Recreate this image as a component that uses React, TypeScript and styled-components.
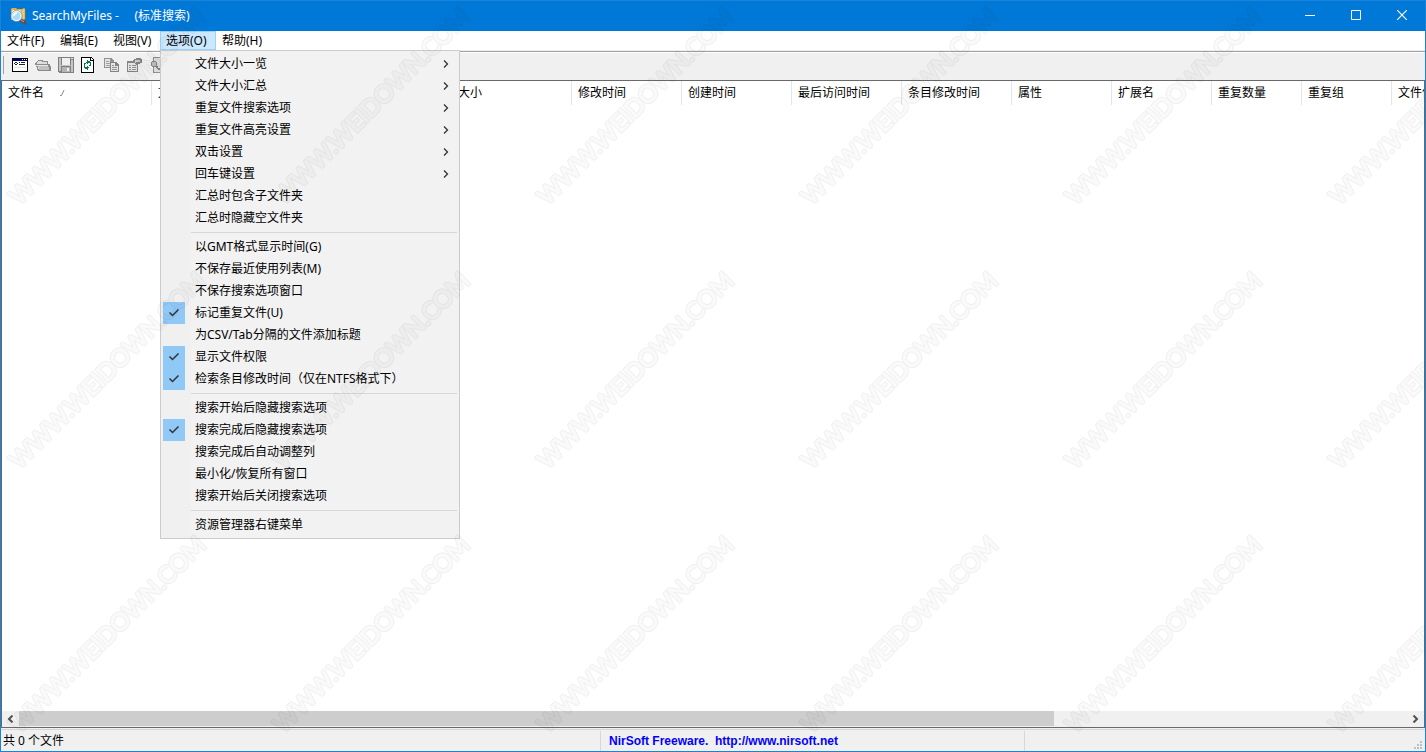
import React from "react";
import styled, { createGlobalStyle } from "styled-components";

const GlobalStyle = createGlobalStyle`
  *, *::before, *::after { box-sizing: border-box; }
  body {
    margin: 0;
    font-family: "Noto Sans", "Noto Sans CJK SC", sans-serif;
    font-size: 12px;
    line-height: 16px;
    color: #000;
  }
  button {
    font: inherit;
    color: inherit;
    background: none;
    border: 0;
    padding: 0;
    margin: 0;
  }
`;

const Window = styled.div`
  position: relative;
  display: flex;
  flex-direction: column;
  min-height: 100vh;
  border: 1px solid #1a82d8;
  background: #f0f0f0;
  overflow: hidden;
`;

const TitleBar = styled.header`
  display: flex;
  align-items: center;
  height: 30px;
  padding-left: 8px;
  background: #0078d7;
  color: #fff;
`;

const Title = styled.h1`
  flex: 1;
  margin: 0 0 0 5px;
  font-size: 12px;
  font-weight: 400;
  white-space: pre;
`;

const CaptionButton = styled.button`
  display: grid;
  place-items: center;
  width: 46px;
  height: 30px;
  padding-bottom: 2px;
`;

const MenuBar = styled.nav`
  display: flex;
  height: 20px;
  background: #fff;
  border-bottom: 1px solid #f0f0f0;
`;

const MenuSlot = styled.div`
  position: relative;
`;

const MenuTab = styled.button<{ $open?: boolean }>`
  min-width: ${(p) => (p.$open ? 56 : 53)}px;
  height: 19px;
  padding: 0 5px;
  border: 1px solid ${(p) => (p.$open ? "#99d1ff" : "transparent")};
  background: ${(p) => (p.$open ? "#cce8ff" : "transparent")};
  line-height: 17px;
  text-align: left;
  white-space: nowrap;
`;

const Dropdown = styled.div`
  position: absolute;
  z-index: 2;
  top: 19px;
  left: 0;
  width: 300px;
  padding: 2px;
  border: 1px solid #ccc;
  background: linear-gradient(to right, #f0f0f0 30px, #f2f2f2 30px);
`;

const MenuRow = styled.button`
  display: flex;
  align-items: center;
  width: 100%;
  height: 22px;
  text-align: left;
`;

const CheckCell = styled.span<{ $on?: boolean }>`
  display: grid;
  place-items: center;
  width: 22px;
  height: 22px;
  margin-right: 10px;
  background: ${(p) => (p.$on ? "#90c8f6" : "transparent")};
`;

const MenuText = styled.span`
  flex: 1;
  white-space: nowrap;
`;

const ArrowCell = styled.span`
  display: grid;
  place-items: center;
  width: 22px;
`;

const Divider = styled.hr`
  height: 1px;
  margin: 3px 0 3px 28px;
  border: 0;
  background: #d7d7d7;
`;

const ToolBar = styled.div`
  display: flex;
  align-items: center;
  gap: 7px;
  height: 29px;
  padding: 0 2px 2px;
  border-top: 1px solid #a0a0a0;
  box-shadow: inset 0 1px #fff;
`;

const Grip = styled.span`
  width: 1px;
  height: 18px;
  margin-right: 1px;
  background: #a0a0a0;
`;

const ToolButton = styled.button`
  display: block;
  width: 16px;
  height: 16px;
  svg { display: block; }
`;

const ListView = styled.main`
  display: flex;
  flex: 1;
  flex-direction: column;
  border: 1px solid #696969;
  background: #fff;
  overflow: hidden;
`;

const ListBody = styled.div`
  flex: 1;
  overflow: hidden;
`;

const Table = styled.table`
  width: 1480px;
  table-layout: fixed;
  border-collapse: collapse;
`;

const HeadCell = styled.th<{ $width: number }>`
  width: ${(p) => p.$width}px;
  height: 24px;
  padding: 0 6px;
  font-weight: 400;
  text-align: left;
  white-space: nowrap;
  box-shadow: inset -1px 0 #e5e5e5;
`;

const SortMark = styled.svg`
  margin-left: 15px;
`;

const ScrollBar = styled.div`
  display: flex;
  height: 16px;
  background: #f0f0f0;
`;

const ScrollButton = styled.button`
  display: grid;
  place-items: center;
  width: 17px;
  height: 16px;
`;

const Track = styled.div`
  display: flex;
  flex: 1;
`;

const Thumb = styled.div`
  flex: 1035;
  height: 15px;
  background: #cdcdcd;
`;

const TrackRest = styled.div`
  flex: 353;
`;

const StatusBar = styled.footer`
  display: flex;
  align-items: flex-end;
  height: 22px;
  margin-top: 1px;
  border-top: 1px solid #d7d7d7;
`;

const StatusPart = styled.div<{ $grow: number }>`
  flex: ${(p) => p.$grow} 1 0;
  height: 20px;
  padding: 0 2px;
  line-height: 20px;
  border-right: 1px solid #d7d7d7;
  &:last-child {
    display: flex;
    align-items: flex-end;
    justify-content: flex-end;
    padding: 0;
    border: 0;
  }
`;

const HomeLink = styled.a`
  padding-left: 6px;
  color: #0000ff;
  font-family: "Liberation Sans", Arial, sans-serif;
  font-weight: 700;
  text-decoration: none;
  white-space: pre;
`;

const Overlay = styled.svg`
  position: absolute;
  z-index: 3;
  inset: 0;
  width: 100%;
  height: 100%;
  pointer-events: none;
`;

type Entry = { text: string; arrow?: boolean; on?: boolean };

const groups: Entry[][] = [
  [
    { text: "文件大小一览", arrow: true },
    { text: "文件大小汇总", arrow: true },
    { text: "重复文件搜索选项", arrow: true },
    { text: "重复文件高亮设置", arrow: true },
    { text: "双击设置", arrow: true },
    { text: "回车键设置", arrow: true },
    { text: "汇总时包含子文件夹" },
    { text: "汇总时隐藏空文件夹" },
  ],
  [
    { text: "以GMT格式显示时间(G)" },
    { text: "不保存最近使用列表(M)" },
    { text: "不保存搜索选项窗口" },
    { text: "标记重复文件(U)", on: true },
    { text: "为CSV/Tab分隔的文件添加标题" },
    { text: "显示文件权限", on: true },
    { text: "检索条目修改时间（仅在NTFS格式下）", on: true },
  ],
  [
    { text: "搜索开始后隐藏搜索选项" },
    { text: "搜索完成后隐藏搜索选项", on: true },
    { text: "搜索完成后自动调整列" },
    { text: "最小化/恢复所有窗口" },
    { text: "搜索开始后关闭搜索选项" },
  ],
  [{ text: "资源管理器右键菜单" }],
];

const columns: [string, number][] = [
  ["文件名", 150],
  ["文件夹", 300],
  ["大小", 120],
  ["修改时间", 110],
  ["创建时间", 110],
  ["最后访问时间", 110],
  ["条目修改时间", 110],
  ["属性", 100],
  ["扩展名", 100],
  ["重复数量", 90],
  ["重复组", 90],
  ["文件位置", 90],
];

const AppIcon = () => (
  <svg width="18" height="18" viewBox="0 0 18 18" aria-hidden="true">
    <path d="M2 2l1-1h4l1 1h5v11H2z" fill="#e2b04a" />
    <path d="M3 3h10v10H3z" fill="#ffe9a6" />
    <path d="M12 3l3-2 1 1v10l-3 2z" fill="#f3c968" stroke="#b98a35" strokeWidth="0.500" />
    <path d="M11 12l5 4" stroke="#6d4a35" strokeWidth="3" strokeLinecap="round" />
    <path d="M11 12l4 3" stroke="#e0a777" strokeWidth="1" />
    <circle cx="7.500" cy="9" r="4.800" fill="#a9dcfa" stroke="#eef6fb" strokeWidth="1.600" />
    <circle cx="7.500" cy="9" r="5.600" fill="none" stroke="#5d7f9b" strokeWidth="0.600" />
    <path d="M5 9a3 3 0 0 1 3-3" stroke="#fff" strokeWidth="1.500" fill="none" />
  </svg>
);

const ToolSvg = ({ children }: { children: React.ReactNode }) => (
  <svg width="16" height="16" viewBox="0 0 16 16" shapeRendering="crispEdges" aria-hidden="true">
    {children}
  </svg>
);

const tools: [string, React.ReactNode][] = [
  [
    "搜索选项",
    <>
      <path d="M0 1h16v14H0z" fill="#000" />
      <path d="M1 4h14v10H1z" fill="#fff" />
      <path d="M1 2h14v2H1z" fill="#000080" />
      <path d="M10 2h1v1h-1zM12 2h1v1h-1zM14 2h1v1h-1z" fill="#fff" />
      <path d="M3 5h2v1H3zM2 6h1v1H2zM5 6h1v1H5zM3 7h2v1H3zM7 5h1v1H7zM9 5h4v1H9zM7 7h6v1H7z" fill="#222" />
      <path d="M2 10h12v1H2z" fill="#e4e4e4" />
    </>,
  ],
  [
    "打开",
    <>
      <path d="M1 5h1V4h1V3h5v1h5v3h2v2h1v5H3v-1H2v-3H1V8H0V6h1z" fill="#8b8b8b" />
      <path d="M3 4h4v1h5v2H2V5h1z" fill="#dedede" />
      <path d="M1 8h12v2h1v3H4v-2H3v-2H1z" fill="#c0c0c0" />
      <path d="M1 8h12v1H1zM3 10h1v2H3z" fill="#e8e8e8" />
    </>,
  ],
  [
    "保存",
    <>
      <path d="M0 0h16v16H1v-1H0z" fill="#808080" />
      <path d="M1 1h2v13H1zM13 3h2v12h-2zM3 8h10v1H3z" fill="#c4c4c4" />
      <path d="M4 1h8v7H4z" fill="#efefef" />
      <path d="M13 1h2v1h-2z" fill="#efefef" />
      <path d="M4 10h8v5H4z" fill="#b4b4b4" />
      <path d="M9 11h2v3H9z" fill="#f0f0f0" />
    </>,
  ],
  [
    "刷新",
    <>
      <path d="M0 0h10l3 3v13H0z" fill="#000" />
      <path d="M1 1h8v3h3v11H1z" fill="#fff" />
      <path d="M10 1h1v1h1v1h-2z" fill="#fff" />
      <path d="M6 3h1v1h2v1h1v3H9V6H7v1H6V6H5V5h1z" fill="#008040" />
      <path d="M3 7h1v3h2V9h1v1h1v1H7v2H6v-1H4v-1H3zM3 6h2v1H3zM8 8h2v1H8z" fill="#008040" />
    </>,
  ],
  [
    "复制",
    <>
      <path d="M0 1h7l3 3v7H0z" fill="#929292" />
      <path d="M1 2h5v3h3v5H1z" fill="#e4e4e4" />
      <path d="M2 4h3v1H2zM2 6h5v1H2zM2 8h5v1H2z" fill="#a0a0a0" />
      <path d="M6 5h6l3 3v7H6z" fill="#858585" />
      <path d="M7 6h4v3h3v5H7z" fill="#e4e4e4" />
      <path d="M8 8h2v1H8zM8 10h5v1H8zM8 12h5v1H8z" fill="#969696" />
    </>,
  ],
  [
    "属性",
    <>
      <path d="M0 4h11v11H0z" fill="#858585" />
      <path d="M1 6h9v8H1z" fill="#e2e2e2" />
      <path d="M2 8h2v1H2zM5 8h4v1H5zM2 10h2v1H2zM5 10h4v1H5zM2 12h2v1H2zM5 12h4v1H5z" fill="#929292" />
      <path d="M6 3h1V2h2V1h5v1h1v4h-2v1h-2v1H9V7H8V6H7V5H6z" fill="#858585" />
      <path d="M8 3h5v2H9v1H8z" fill="#c9c9c9" />
    </>,
  ],
  [
    "查找",
    <>
      <path d="M3 0h12v16H3z" fill="#909090" />
      <path d="M4 1h10v14H4z" fill="#dadada" />
      <path d="M2 4h4v1h1v4H6v1H2V9H1V5h1z" fill="#858585" />
      <path d="M2 5h4v4H2z" fill="#bcbcbc" />
      <path d="M6 9h2v2h2v2H8v-1H7v-1H6z" fill="#808080" />
    </>,
  ],
];

const OptionsMenu = () => (
  <Dropdown role="menu" aria-label="选项">
    {groups.map((group, i) => (
      <React.Fragment key={i}>
        {i > 0 && <Divider />}
        {group.map((entry) => (
          <MenuRow
            key={entry.text}
            type="button"
            role={entry.arrow ? "menuitem" : "menuitemcheckbox"}
            aria-checked={entry.arrow ? undefined : !!entry.on}
          >
            <CheckCell $on={entry.on}>
              {entry.on && (
                <svg width="12" height="10" viewBox="0 0 12 10" aria-hidden="true">
                  <path d="M1.500 4.500l3 3 6-6" stroke="#333" strokeWidth="1.500" fill="none" />
                </svg>
              )}
            </CheckCell>
            <MenuText>{entry.text}</MenuText>
            {entry.arrow && (
              <ArrowCell>
                <svg width="6" height="8" viewBox="0 0 6 8" aria-hidden="true">
                  <path d="M1 0.500l3.500 3.500L1 7.500" stroke="#333" strokeWidth="1.300" fill="none" />
                </svg>
              </ArrowCell>
            )}
          </MenuRow>
        ))}
      </React.Fragment>
    ))}
  </Dropdown>
);

const Watermark = () => (
  <Overlay aria-hidden="true">
    <defs>
      <g id="mark" transform="translate(132 132) rotate(-45)">
        <text y="9" textAnchor="middle" fontFamily="Lato, sans-serif" fontSize="24" strokeLinejoin="round">
          WWW.WEIDOWN.COM
        </text>
      </g>
      <mask id="outline" maskUnits="userSpaceOnUse" x="0" y="0" width="264" height="264">
        <use href="#mark" fill="#fff" stroke="#fff" strokeWidth="3" />
        <use href="#mark" fill="#555" stroke="#555" strokeWidth="1" />
      </mask>
      <pattern id="tiles" patternUnits="userSpaceOnUse" x="238" y="237" width="264" height="264">
        <rect width="264" height="264" fill="#000" fillOpacity="0.06" mask="url(#outline)" />
      </pattern>
    </defs>
    <rect width="100%" height="100%" fill="url(#tiles)" />
  </Overlay>
);

export default function App() {
  return (
    <>
      <GlobalStyle />
      <Window>
        <TitleBar>
          <AppIcon />
          <Title>{"SearchMyFiles -     (标准搜索)"}</Title>
          <CaptionButton type="button" aria-label="最小化">
            <svg width="10" height="10"><path d="M0 5.500h10" stroke="#fff" /></svg>
          </CaptionButton>
          <CaptionButton type="button" aria-label="最大化">
            <svg width="10" height="10"><path d="M.5.500h9v9h-9z" stroke="#fff" fill="none" /></svg>
          </CaptionButton>
          <CaptionButton type="button" aria-label="关闭">
            <svg width="10" height="10"><path d="M0 0l10 10M10 0L0 10" stroke="#fff" strokeWidth="1.200" /></svg>
          </CaptionButton>
        </TitleBar>
        <MenuBar>
          <MenuTab type="button">文件(F)</MenuTab>
          <MenuTab type="button">编辑(E)</MenuTab>
          <MenuTab type="button">视图(V)</MenuTab>
          <MenuSlot>
            <MenuTab type="button" $open aria-expanded="true">选项(O)</MenuTab>
            <OptionsMenu />
          </MenuSlot>
          <MenuTab type="button">帮助(H)</MenuTab>
        </MenuBar>
        <ToolBar role="toolbar" aria-label="工具栏">
          <Grip />
          {tools.map(([label, art]) => (
            <ToolButton key={label} type="button" aria-label={label}>
              <ToolSvg>{art}</ToolSvg>
            </ToolButton>
          ))}
        </ToolBar>
        <ListView>
          <ListBody>
            <Table>
              <thead>
                <tr>
                  {columns.map(([name, width], i) => (
                    <HeadCell key={name} $width={width} scope="col">
                      {name}
                      {i === 0 && (
                        <SortMark width="6" height="8" aria-hidden="true">
                          <path d="M1 6.500h1.500L5 1" stroke="#8a8a8a" fill="none" />
                        </SortMark>
                      )}
                    </HeadCell>
                  ))}
                </tr>
              </thead>
            </Table>
          </ListBody>
          <ScrollBar>
            <ScrollButton type="button" aria-label="向左滚动">
              <svg width="7" height="8"><path d="M5.500 0.500L2 4l3.500 3.500" stroke="#505050" strokeWidth="2" fill="none" /></svg>
            </ScrollButton>
            <Track>
              <Thumb />
              <TrackRest />
            </Track>
            <ScrollButton type="button" aria-label="向右滚动">
              <svg width="7" height="8"><path d="M1.500 0.500L5 4 1.500 7.500" stroke="#505050" strokeWidth="2" fill="none" /></svg>
            </ScrollButton>
          </ScrollBar>
        </ListView>
        <StatusBar>
          <StatusPart $grow={595}>共 0 个文件</StatusPart>
          <StatusPart $grow={419}>
            <HomeLink href="http://www.nirsoft.net">{"NirSoft Freeware.  http://www.nirsoft.net"}</HomeLink>
          </StatusPart>
          <StatusPart $grow={400}>
            <svg width="12" height="10" aria-hidden="true">
              <path d="M7 0h2v2H7zM4 3h2v2H4zM7 3h2v2H7zM1 6h2v2H1zM4 6h2v2H4zM7 6h2v2H7z" fill="#bfbfbf" />
            </svg>
          </StatusPart>
        </StatusBar>
        <Watermark />
      </Window>
    </>
  );
}
